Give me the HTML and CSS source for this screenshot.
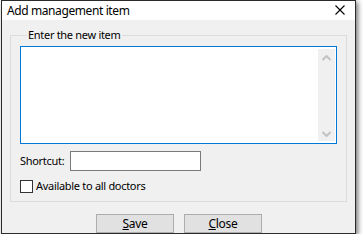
FILE: index.html
```html
<!DOCTYPE html>
<html lang="en">
<head>
    <meta charset="UTF-8">
    <title>Add management item</title>
    <link rel="stylesheet" href="styles.css">
</head>
<body>
    <div class="dialog">
        <div class="titlebar">
            <span class="title">Add management item</span>
            <svg class="close-x" width="10" height="10" viewBox="0 0 10 10">
                <path d="M0.5 0.5 L9.5 9.5 M9.5 0.5 L0.5 9.5" stroke="#000" stroke-width="1.1"/>
            </svg>
        </div>
        <div class="content">
            <fieldset class="group">
                <legend>Enter the new item</legend>
                <div class="memo">
                    <div class="memo-text"></div>
                    <div class="scrollbar">
                        <svg width="9" height="6" viewBox="0 0 9 6"><path d="M0.5 5 L4.5 1 L8.5 5" fill="none" stroke="#c2c2c2" stroke-width="2"/></svg>
                        <svg width="9" height="6" viewBox="0 0 9 6"><path d="M0.5 1 L4.5 5 L8.5 1" fill="none" stroke="#c2c2c2" stroke-width="2"/></svg>
                    </div>
                </div>
                <div class="row">
                    <label class="lbl shortcut-lbl">Shortcut:</label>
                    <div class="textbox"></div>
                </div>
                <div class="row check-row">
                    <span class="checkbox"></span>
                    <label class="lbl">Available to all doctors</label>
                </div>
            </fieldset>
            <div class="buttons">
                <button><u>S</u>ave</button>
                <button><u>C</u>lose</button>
            </div>
        </div>
    </div>
</body>
</html>
```

FILE: styles.css
```css
body {
    margin: 0;
    padding: 0 0 0 1px;
    background: #fff;
    font-family: "Segoe UI", "Noto Sans", "Liberation Sans", sans-serif;
    font-size: 11px;
    letter-spacing: -0.3px;
    color: #000;
}
.dialog {
    width: 353px;
    height: 232px;
    border: 1px solid #2b2b2b;
    background: #f0f0f0;
    box-shadow: 2px 2px 5px rgba(0, 0, 0, 0.55);
    display: flex;
    flex-direction: column;
}
.titlebar {
    height: 25px;
    background: #fff;
    display: flex;
    align-items: center;
    justify-content: space-between;
    padding: 0 10px 0 5px;
}
.title {
    font-size: 12px;
    letter-spacing: -0.4px;
    margin-top: -1px;
}
.close-x {
    display: block;
    margin-top: -1px;
}
.content {
    padding: 0 8px;
}
.group {
    margin: 8px 0 0 0;
    padding: 4px 9px 8px 9px;
    border: 1px solid #dcdcdc;
}
.group legend {
    padding: 0 1px;
    margin-left: 7px;
    line-height: 14px;
}
.memo {
    height: 92px;
    border: 1px solid #0078d7;
    background: #fff;
    display: flex;
    justify-content: flex-end;
    padding: 2px 1px 2px 0;
}
.memo-text {
    flex: 1;
}
.scrollbar {
    width: 17px;
    background: #f0f0f0;
    display: flex;
    flex-direction: column;
    justify-content: space-between;
    align-items: center;
    padding: 6px 0 4px;
}
.scrollbar svg {
    display: block;
}
.row {
    display: flex;
    align-items: center;
    margin-top: 7px;
}
.lbl {
    line-height: 14px;
}
.shortcut-lbl {
    width: 50px;
}
.textbox {
    width: 129px;
    height: 18px;
    border: 1px solid #7a7a7a;
    background: #fff;
}
.check-row {
    margin-top: 8px;
}
.checkbox {
    width: 11px;
    height: 11px;
    border: 1px solid #333;
    background: #fff;
    margin-right: 3px;
}
.buttons {
    display: flex;
    justify-content: center;
    gap: 10px;
    margin-top: 12px;
    padding-left: 1px;
}
button {
    width: 78px;
    height: 19px;
    border: 1px solid #adadad;
    background: #e1e1e1;
    font-family: inherit;
    font-size: 12px;
    letter-spacing: -0.3px;
    padding: 0;
    line-height: 16px;
}
```
